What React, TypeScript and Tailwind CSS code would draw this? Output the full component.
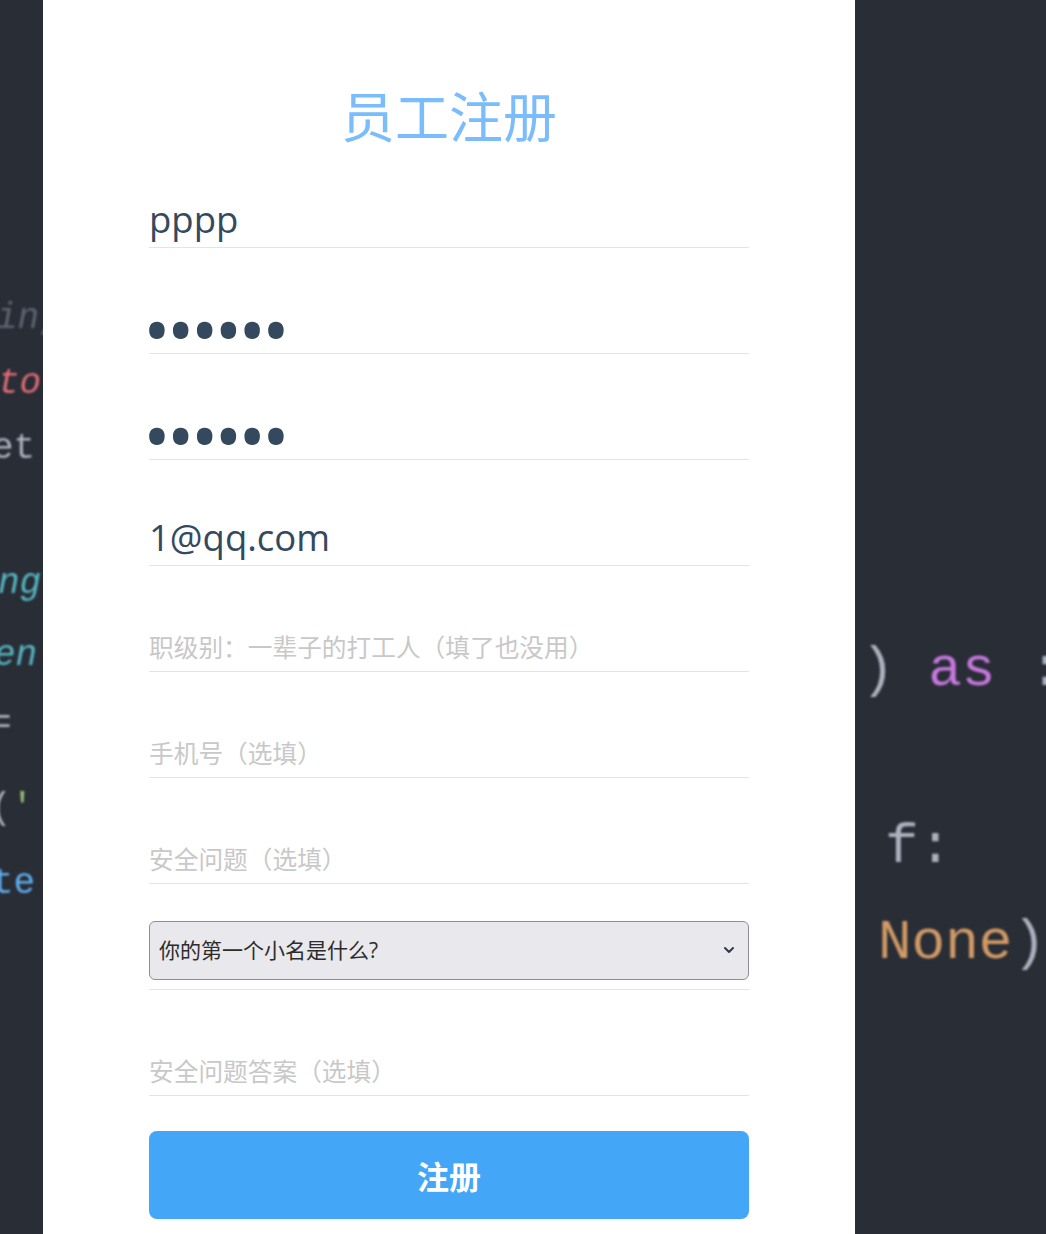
import React from "react";
import { ChevronDown } from "lucide-react";

function Field({
  value,
  placeholder,
  type = "text",
  big = false,
}: {
  value?: string;
  placeholder?: string;
  type?: string;
  big?: boolean;
}) {
  return (
    <div className="mt-[49px] h-[57px] overflow-hidden border-b border-[#e4e4e4]">
      <input
        type={type}
        defaultValue={value}
        placeholder={placeholder}
        className={
          big
            ? "block h-full w-full bg-transparent pt-[6px] indent-[-6px] text-[74px] leading-[50px] tracking-[-4px] text-[#34495e] outline-none font-['Open_Sans',sans-serif]"
            : "block h-full w-full bg-transparent text-[36.5px] text-[#34495e] outline-none placeholder:text-[24.7px] placeholder:text-[#c8c8c8] font-['Open_Sans','Noto_Sans_CJK_SC',sans-serif]"
        }
      />
    </div>
  );
}

export default function App() {
  return (
    <div className="relative min-h-[1234px] w-full overflow-hidden bg-[#292d36]">
      {/* background code picture */}
      <div className="pointer-events-none absolute inset-0 blur-[0.8px] font-['Liberation_Mono',monospace]">
        <span className="absolute left-[-4px] top-[292px] text-[36px] italic text-[#5c6370]">in,</span>
        <span className="absolute left-[-2px] top-[357px] text-[36px] italic text-[#e06c75]">to</span>
        <span className="absolute left-[-8px] top-[422px] text-[36px] text-[#abb2bf]">et</span>
        <span className="absolute left-[-2px] top-[557px] text-[36px] italic text-[#56b6c2]">ng</span>
        <span className="absolute left-[-6px] top-[629px] text-[36px] italic text-[#56b6c2]">en</span>
        <span className="absolute left-[-10px] top-[697px] text-[36px] text-[#abb2bf]">=</span>
        <span className="absolute left-[-10px] top-[782px] text-[36px] text-[#abb2bf]">
          {" "}(<span className="text-[#98c379]">'</span>
        </span>
        <span className="absolute left-[-8px] top-[857px] text-[36px] text-[#61afef]">te</span>

        <span className="absolute left-[861px] top-[628px] whitespace-pre text-[56px] text-[#abb2bf]">
          ) <span className="text-[#c678dd]">as</span> :
        </span>
        <span className="absolute left-[885px] top-[805px] whitespace-pre text-[56px] text-[#abb2bf]">f:</span>
        <span className="absolute left-[878px] top-[901px] whitespace-pre text-[56px] text-[#d19a66]">
          None<span className="text-[#abb2bf]">)</span>
        </span>
      </div>

      {/* panel */}
      <div className="relative ml-[43px] min-h-[1234px] w-[812px] bg-white">
        <div className="mx-auto w-[600px] pb-[16px]">
          <h1
            className="pt-[87px] text-center text-[54px] font-normal leading-[55px] text-[#7abcfc]"
            style={{ fontFamily: '"Noto Sans CJK SC", sans-serif' }}
          >
            员工注册
          </h1>

          <Field value="pppp" />
          <Field value="123456" type="password" big />
          <Field value="123456" type="password" big />
          <Field value="1@qq.com" />
          <Field placeholder="职级别：一辈子的打工人（填了也没用）" />
          <Field placeholder="手机号（选填）" />
          <Field placeholder="安全问题（选填）" />

          <div className="mt-[37px] border-b border-[#e4e4e4] pb-[9px]">
            <div className="relative h-[59px]">
              <select
                className="block h-full w-full appearance-none rounded-[6px] border border-[#8e8d96] bg-[#e9e8ed] pl-[9px] text-[21px] text-[#2c2c2c] outline-none font-['Open_Sans','Noto_Sans_CJK_SC',sans-serif]"
                defaultValue="q1"
              >
                <option value="q1">你的第一个小名是什么?</option>
              </select>
              <ChevronDown
                className="pointer-events-none absolute right-[12px] top-[21px] text-[#2f3b4a]"
                size={16}
                strokeWidth={3}
              />
            </div>
          </div>

          <Field placeholder="安全问题答案（选填）" />

          <button
            className="mt-[35px] flex h-[88px] w-full items-center justify-center rounded-[8px] bg-[#43a6f6] text-[32px] font-bold text-white"
            style={{ fontFamily: '"Noto Sans CJK SC", sans-serif' }}
          >
            注册
          </button>
        </div>
      </div>
    </div>
  );
}
